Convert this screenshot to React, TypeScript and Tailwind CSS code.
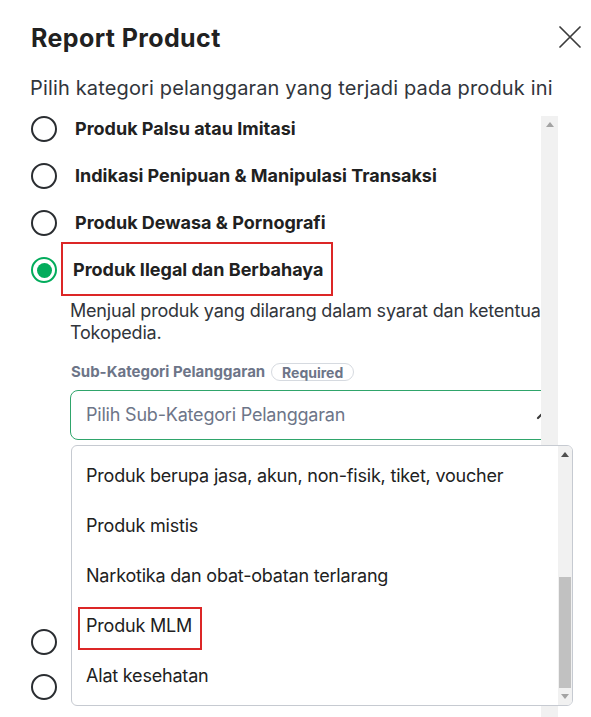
import React from "react";

function Radio({ checked = false }: { checked?: boolean }) {
  if (checked) {
    return (
      <span className="w-[26px] h-[26px] shrink-0 rounded-full border-[2px] border-[#03ac5c] flex items-center justify-center bg-white">
        <span className="w-[15px] h-[15px] rounded-full bg-[#03ac5c]" />
      </span>
    );
  }
  return <span className="w-[26px] h-[26px] shrink-0 rounded-full border-[2px] border-[#2a2d31] bg-white" />;
}

function Row({ label, checked = false, box = false }: { label?: string; checked?: boolean; box?: boolean }) {
  return (
    <div className={`relative flex items-center h-[26px] ${checked ? "gap-[16px]" : "gap-[18px]"}`}>
      <Radio checked={checked} />
      {label && (
        <span className="text-[18px] leading-[24px] font-bold text-[#212121] whitespace-nowrap">{label}</span>
      )}
      {box && <span className="absolute left-[30px] top-[-15px] w-[272px] h-[54px] border-2 border-[#dc2626]" />}
    </div>
  );
}

const items = [
  "Produk berupa jasa, akun, non-fisik, tiket, voucher",
  "Produk mistis",
  "Narkotika dan obat-obatan terlarang",
  "Produk MLM",
  "Alat kesehatan",
];

export default function App() {
  return (
    <div className="relative w-[591px] h-[717px] overflow-hidden bg-white font-['Inter',sans-serif] text-[#2e3137]">
      <header className="flex items-start justify-between pl-[31px] pr-[10px] pt-[22px]">
        <h1 className="text-[25px] leading-[32px] font-bold text-[#212121] tracking-[0.4px]">Report Product</h1>
        <button className="mt-[4px] w-[22px] h-[22px]" aria-label="close">
          <svg width="22" height="22" viewBox="0 0 22 22" fill="none" stroke="#3b3b3b" strokeWidth="1.7" strokeLinecap="round">
            <path d="M1 1 L21 21 M21 1 L1 21" />
          </svg>
        </button>
      </header>
      <p className="mt-[20px] pl-[30px] text-[20px] leading-[28px] text-[#31353b] whitespace-nowrap tracking-[0.15px]">
        Pilih kategori pelanggaran yang terjadi pada produk ini
      </p>

      <div className="mt-[14px] flex h-[601px]">
        <div className="w-[541px] overflow-hidden pl-[31px]">
          <div className="flex flex-col gap-[21px]">
            <Row label="Produk Palsu atau Imitasi" />
            <Row label="Indikasi Penipuan & Manipulasi Transaksi" />
            <Row label="Produk Dewasa & Pornografi" />
            <Row label="Produk Ilegal dan Berbahaya" checked box />
          </div>
          <div className="ml-[39px]">
            <p className="mt-[17px] text-[18px] leading-[22px] text-[#31353b] whitespace-nowrap tracking-[-0.2px]">
              Menjual produk yang dilarang dalam syarat dan ketentuan
              <br />
              Tokopedia.
            </p>
            <div className="mt-[18px] flex items-center gap-[6px] h-[20px]">
              <span className="ml-[1px] text-[15px] leading-[20px] font-bold text-[#6d7588] whitespace-nowrap">
                Sub-Kategori Pelanggaran
              </span>
              <span className="h-[18px] w-[83px] rounded-full border border-[#d6dae0] flex items-center justify-center text-[14px] font-bold text-[#6d7588]">
                Required
              </span>
            </div>
            <div className="mt-[8px] w-[502px] h-[50px] rounded-[8px] border border-[#2fa56b] flex items-center justify-between pl-[15px] pr-[15px]">
              <span className="text-[18px] leading-[24px] text-[#6d7588] whitespace-nowrap tracking-[-0.2px]">Pilih Sub-Kategori Pelanggaran</span>
              <svg width="24" height="24" viewBox="0 0 24 24" fill="none" stroke="#3b3b3b" strokeWidth="2.2" strokeLinecap="round" strokeLinejoin="round">
                <path d="m18 15-6-6-6 6" />
              </svg>
            </div>
          </div>
          <div className="mt-[189px] flex flex-col gap-[19px]">
            <Row />
            <Row />
          </div>
        </div>
        <div className="w-[17px] bg-[#f1f1f1] flex flex-col items-center pt-[6px]">
          <svg width="8" height="5" viewBox="0 0 8 5">
            <path d="M0 5 L4 0 L8 5 Z" fill="#a3a3a3" />
          </svg>
        </div>
      </div>

      <div className="absolute left-[71px] top-[445px] w-[502px] h-[261px] rounded-[6px] border border-[#c6cad1] bg-white flex overflow-hidden">
        <div className="flex-1 pt-[5px] pl-[14px]">
          {items.map((it) => (
            <div key={it} className="relative h-[50px] flex items-center">
              <span className="text-[18px] leading-[24px] text-[#212121] whitespace-nowrap tracking-[-0.2px]">{it}</span>
              {it === "Produk MLM" && (
                <span className="absolute left-[-8px] top-[6px] w-[124px] h-[43px] border-2 border-[#dc2626]" />
              )}
            </div>
          ))}
        </div>
        <div className="w-[14px] bg-[#f1f1f1] flex flex-col items-center">
          <div className="h-[17px] flex items-center justify-center">
            <svg width="8" height="5" viewBox="0 0 8 5">
              <path d="M0 5 L4 0 L8 5 Z" fill="#505050" />
            </svg>
          </div>
          <div className="mt-[114px] w-[12px] h-[111px] bg-[#c1c1c1]" />
          <div className="flex-1 flex items-center justify-center">
            <svg width="8" height="5" viewBox="0 0 8 5">
              <path d="M0 0 L8 0 L4 5 Z" fill="#a3a3a3" />
            </svg>
          </div>
        </div>
      </div>
    </div>
  );
}
